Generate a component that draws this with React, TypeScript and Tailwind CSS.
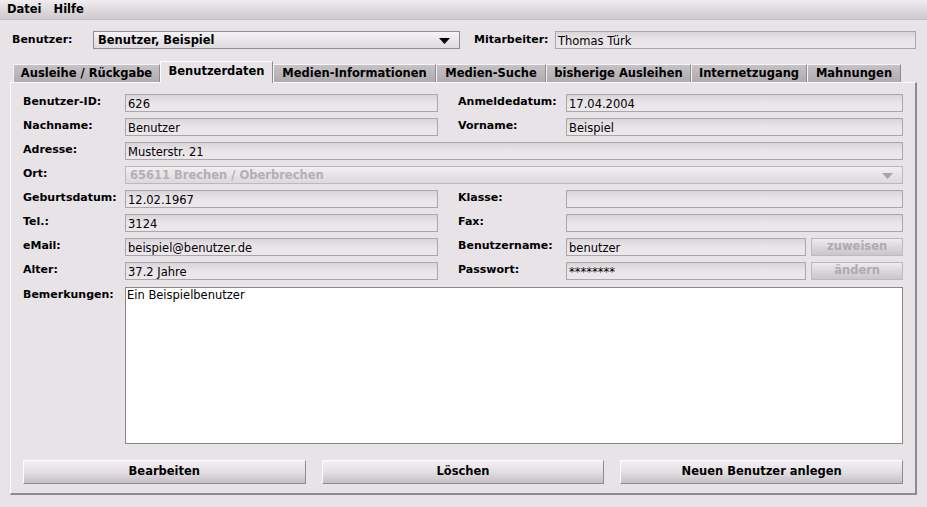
const font = { fontFamily: '"DejaVu Sans", "Liberation Sans", sans-serif' };

function Field({ value = '', className = '' }: { value?: string; className?: string }) {
  return (
    <div
      className={`h-[18px] border border-[#aaa6aa] bg-linear-to-b from-[#d9d5d9] via-[#e9e5e9] to-[#ebe7eb] px-[2px] pt-[3px] leading-[13px] text-[11.5px] text-black whitespace-nowrap overflow-hidden ${className}`}
    >
      {value}
    </div>
  );
}

function Label({ text, w }: { text: string; w: string }) {
  return <div className={`${w} shrink-0 font-bold text-[11px] leading-[14px] text-black pt-[1px] whitespace-nowrap`}>{text}</div>;
}

function SmallButton({ text }: { text: string }) {
  return (
    <div className="w-[92px] h-[18px] ml-[5px] border border-[#bdb9bd] bg-linear-to-b from-[#eeeaee] to-[#c9c5c9] flex items-center justify-center font-bold text-[11.5px] text-[#aeaaae]">
      {text}
    </div>
  );
}

function BigButton({ text }: { text: string }) {
  return (
    <div className="w-[283px] h-[24px] border border-[#8e8a8e] border-t-[#fbfbfb] border-l-[#fbfbfb] bg-linear-to-b from-[#f3eff3] via-[#e3dfe3] to-[#c3bfc3] flex items-center justify-center font-bold text-[11.5px] text-black">
      {text}
    </div>
  );
}

const tabs = [
  { name: 'Ausleihe / Rückgabe', w: 'w-[147px]' },
  { name: 'Benutzerdaten', w: 'w-[113px]' },
  { name: 'Medien-Informationen', w: 'w-[163px]' },
  { name: 'Medien-Suche', w: 'w-[110px]' },
  { name: 'bisherige Ausleihen', w: 'w-[145px]' },
  { name: 'Internetzugang', w: 'w-[116px]' },
  { name: 'Mahnungen', w: 'w-[94px]' },
];

export default function App() {
  return (
    <div style={font} className="w-[927px] h-[507px] bg-[#e7e3e7] overflow-hidden flex flex-col">
      {/* menu */}
      <div className="h-[20px] bg-linear-to-b from-[#f0ecf0] to-[#cdc9cd] border-b border-[#c4c0c4] flex items-center gap-[12px] px-[7px] font-bold text-[11.5px] text-black">
        <span>Datei</span>
        <span>Hilfe</span>
      </div>

      {/* benutzer row */}
      <div className="flex items-center mt-[11px] pl-[12px] h-[18px]">
        <div className="w-[81px] font-bold text-[11px]">Benutzer:</div>
        <div className="w-[367px] h-[18px] border border-[#8f8b8f] bg-linear-to-b from-[#f6f3f6] to-[#dedade] flex items-center justify-between px-[4px] pt-[2px] font-bold text-[11.5px]">
          <span>Benutzer, Beispiel</span>
          <svg width="11" height="7" viewBox="0 0 11 7" className="mr-[5px]">
            <path d="M0 0 H11 L5.5 6 Z" fill="#000" />
          </svg>
        </div>
        <div className="ml-[14px] w-[81px] font-bold text-[11px]">Mitarbeiter:</div>
        <Field value="Thomas Türk" className="w-[361px]" />
      </div>

      {/* tabs */}
      <div className="mt-[12px] ml-[13px] flex items-end h-[21px] relative z-10">
        {tabs.map((t, i) =>
          i === 1 ? (
            <div
              key={t.name}
              className={`${t.w} h-[22px] bg-[#e7e3e7] border-t border-l border-[#fbfbfb] border-r border-r-[#8e8a8e] flex items-center justify-center font-bold text-[11.5px] pb-[2px] mb-[-1px]`}
            >
              {t.name}
            </div>
          ) : (
            <div
              key={t.name}
              className={`${t.w} h-[18px] bg-linear-to-b from-[#c6c2c6] to-[#aeaaae] border-t border-l border-[#f4f4f4] border-r border-r-[#8e8a8e] flex items-center justify-center pt-[1px] font-bold text-[11.5px]`}
            >
              {t.name}
            </div>
          )
        )}
      </div>

      {/* panel */}
      <div className="ml-[10px] w-[907px] h-[413px] border-t border-l border-[#fbfbfb] border-r-2 border-b-2 border-r-[#8e8a8e] border-b-[#8e8a8e] pt-[11px] pl-[12px] pr-[12px] flex flex-col">
        <div className="flex flex-col gap-[6px]">
          <div className="flex items-start">
            <Label text="Benutzer-ID:" w="w-[102px]" />
            <Field value="626" className="w-[314px]" />
            <Label text="Anmeldedatum:" w="w-[108px] ml-[20px]" />
            <Field value="17.04.2004" className="w-[338px]" />
          </div>
          <div className="flex items-start">
            <Label text="Nachname:" w="w-[102px]" />
            <Field value="Benutzer" className="w-[314px]" />
            <Label text="Vorname:" w="w-[108px] ml-[20px]" />
            <Field value="Beispiel" className="w-[338px]" />
          </div>
          <div className="flex items-start">
            <Label text="Adresse:" w="w-[102px]" />
            <Field value="Musterstr. 21" className="w-[780px]" />
          </div>
          <div className="flex items-start">
            <Label text="Ort:" w="w-[102px]" />
            <div className="w-[780px] h-[18px] border border-[#bcb8bc] bg-linear-to-b from-[#f1eef1] to-[#dcd8dc] flex items-center justify-between px-[4px] pt-[2px] font-bold text-[11.5px] text-[#b3afb3]">
              <span>65611 Brechen / Oberbrechen</span>
              <svg width="11" height="7" viewBox="0 0 11 7" className="mr-[5px]">
                <path d="M0 0 H11 L5.5 6 Z" fill="#a9a5a9" />
              </svg>
            </div>
          </div>
          <div className="flex items-start">
            <Label text="Geburtsdatum:" w="w-[102px]" />
            <Field value="12.02.1967" className="w-[314px]" />
            <Label text="Klasse:" w="w-[108px] ml-[20px]" />
            <Field className="w-[338px]" />
          </div>
          <div className="flex items-start">
            <Label text="Tel.:" w="w-[102px]" />
            <Field value="3124" className="w-[314px]" />
            <Label text="Fax:" w="w-[108px] ml-[20px]" />
            <Field className="w-[338px]" />
          </div>
          <div className="flex items-start">
            <Label text="eMail:" w="w-[102px]" />
            <Field value="beispiel@benutzer.de" className="w-[314px]" />
            <Label text="Benutzername:" w="w-[108px] ml-[20px]" />
            <Field value="benutzer" className="w-[241px]" />
            <SmallButton text="zuweisen" />
          </div>
          <div className="flex items-start">
            <Label text="Alter:" w="w-[102px]" />
            <Field value="37.2 Jahre" className="w-[314px]" />
            <Label text="Passwort:" w="w-[108px] ml-[20px]" />
            <Field value="********" className="w-[241px]" />
            <SmallButton text="ändern" />
          </div>
        </div>

        <div className="flex items-start mt-[7px]">
          <Label text="Bemerkungen:" w="w-[102px]" />
          <div className="w-[779px] h-[157px] bg-white border border-[#8a868a] px-[1px] text-[11.5px] leading-[14px]">
            Ein Beispielbenutzer
          </div>
        </div>

        <div className="flex gap-[16px] mt-[16px]">
          <BigButton text="Bearbeiten" />
          <BigButton text="Löschen" />
          <BigButton text="Neuen Benutzer anlegen" />
        </div>
      </div>
    </div>
  );
}
